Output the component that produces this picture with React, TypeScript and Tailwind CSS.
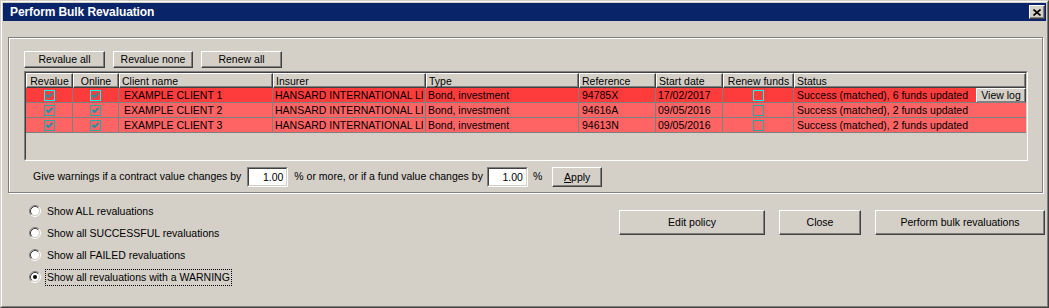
import React from "react";

const RAISED =
  "border border-t-white border-l-white border-r-[#404040] border-b-[#404040] shadow-[inset_-1px_-1px_0_#808080] bg-[#d4d0c8]";
const SUNKEN_OUT = "border border-t-[#808080] border-l-[#808080] border-r-white border-b-white";
const SUNKEN_IN = "border border-t-[#404040] border-l-[#404040] border-r-[#d4d0c8] border-b-[#d4d0c8]";
const COLS = "grid grid-cols-[47px_46px_154px_153px_153px_77px_67px_71px_232px]";

function Btn({ children, className = "" }: { children: React.ReactNode; className?: string }) {
  return (
    <div className={`${RAISED} flex items-center justify-center leading-none text-black ${className}`}>{children}</div>
  );
}

function Check({ checked, bright }: { checked: boolean; bright: boolean }) {
  return (
    <div
      className={`w-[11px] h-[11px] border flex items-center justify-center ${
        bright ? "border-[#00ffff]" : "border-[#2aa6a6]"
      }`}
    >
      {checked && (
        <svg width="9" height="9" viewBox="0 0 9 9">
          <path d="M1.5 4 L3.5 6.2 L7.6 1.8" stroke="#1a94a8" strokeWidth="1.9" fill="none" />
        </svg>
      )}
    </div>
  );
}

function Radio({ checked }: { checked: boolean }) {
  return (
    <svg width="12" height="12" viewBox="0 0 12 12" className="shrink-0">
      <circle cx="6" cy="6" r="4.2" fill="#fff" />
      <path d="M2.11 9.89 A5.5 5.5 0 0 1 9.89 2.11" stroke="#808080" strokeWidth="1" fill="none" />
      <path d="M9.89 2.11 A5.5 5.5 0 0 1 2.11 9.89" stroke="#ffffff" strokeWidth="1" fill="none" />
      <path d="M2.82 9.18 A4.5 4.5 0 0 1 9.18 2.82" stroke="#404040" strokeWidth="1" fill="none" />
      <path d="M9.18 2.82 A4.5 4.5 0 0 1 2.82 9.18" stroke="#d4d0c8" strokeWidth="1" fill="none" />
      {checked && <circle cx="6" cy="6" r="2" fill="#000" />}
    </svg>
  );
}

const headers: { label: string; center?: boolean }[] = [
  { label: "Revalue", center: true },
  { label: "Online", center: true },
  { label: "Client name" },
  { label: "Insurer" },
  { label: "Type" },
  { label: "Reference" },
  { label: "Start date" },
  { label: "Renew funds", center: true },
  { label: "Status" },
];

const rows = [
  { client: "EXAMPLE CLIENT 1", ref: "94785X", date: "17/02/2017", status: "Success (matched), 6 funds updated", sel: true },
  { client: "EXAMPLE CLIENT 2", ref: "94616A", date: "09/05/2016", status: "Success (matched), 2 funds updated", sel: false },
  { client: "EXAMPLE CLIENT 3", ref: "94613N", date: "09/05/2016", status: "Success (matched), 2 funds updated", sel: false },
];

const CELL = "h-[15px] border-r border-b border-[#808080] overflow-hidden whitespace-nowrap leading-[14px] flex items-center";

export default function App() {
  return (
    <div className="w-[1049px] h-[308px] border border-t-[#d4d0c8] border-l-[#d4d0c8] border-r-[#404040] border-b-[#404040] font-['Liberation_Sans',Arial,sans-serif] text-[10.5px] text-black bg-[#d4d0c8]">
      <div className="h-full border border-t-white border-l-white border-r-[#808080] border-b-[#808080] p-px flex flex-col">
        {/* Title bar */}
        <div className="h-[18px] bg-[#0a246a] flex items-center pl-[7px] pr-px shrink-0">
          <span className="text-white font-bold text-[12px] leading-none tracking-[-0.1px]">Perform Bulk Revaluation</span>
          <div className={`${RAISED} ml-auto w-[16px] h-[14px] flex items-center justify-center`}>
            <svg width="8" height="7" viewBox="0 0 8 7">
              <path d="M0.5 0.5 L7.5 6.5 M7.5 0.5 L0.5 6.5" stroke="#000" strokeWidth="1.6" fill="none" />
            </svg>
          </div>
        </div>

        {/* Group box */}
        <div className="mt-[16px] ml-[5px] mr-[3px] border border-[#808080] shadow-[inset_1px_1px_0_#fff,1px_1px_0_#fff] pt-[13px] pl-[15px] pb-[5px]">
          <div className="flex gap-[8px]">
            <Btn className="w-[81px] h-[17px]">Revalue all</Btn>
            <Btn className="w-[80px] h-[17px]">Revalue none</Btn>
            <Btn className="w-[81px] h-[17px]">Renew all</Btn>
          </div>

          <div className={`${SUNKEN_OUT} mt-[3px] w-[1004px] h-[90px]`}>
            <div className={`${SUNKEN_IN} h-full overflow-hidden`}>
              <div className={COLS}>
                {headers.map((h) => (
                  <div
                    key={h.label}
                    className={`h-[15px] border border-t-white border-l-white border-r-[#404040] border-b-[#404040] shadow-[inset_-1px_-1px_0_#808080] leading-[12px] whitespace-nowrap overflow-hidden flex items-center ${
                      h.center ? "justify-center" : "pl-[2px]"
                    }`}
                  >
                    {h.label}
                  </div>
                ))}
              </div>
              {rows.map((r) => (
                <div key={r.client} className={`${COLS} ${r.sel ? "bg-[#ff3c3c]" : "bg-[#ff6464]"}`}>
                  <div className={`${CELL} justify-center`}>
                    <Check checked bright={r.sel} />
                  </div>
                  <div className={`${CELL} justify-center`}>
                    <Check checked bright={r.sel} />
                  </div>
                  <div className={`${CELL} pl-[5px]`}>{r.client}</div>
                  <div className={`${CELL} pl-[2px]`}>
                    <span className="block w-[148px] overflow-hidden">HANSARD INTERNATIONAL LIMITED</span>
                  </div>
                  <div className={`${CELL} pl-[2px]`}>Bond, investment</div>
                  <div className={`${CELL} pl-[3px]`}>{r.ref}</div>
                  <div className={`${CELL} pl-[2px]`}>{r.date}</div>
                  <div className={`${CELL} justify-center`}>
                    <Check checked={false} bright={r.sel} />
                  </div>
                  <div className={`${CELL} pl-[3px] border-r-0`}>
                    <span>{r.status}</span>
                    {r.sel && <Btn className="ml-auto w-[50px] h-[15px]">View log</Btn>}
                  </div>
                </div>
              ))}
            </div>
          </div>

          <div className="mt-[6px] flex items-center h-[20px]">
            <span className="ml-[9px] mr-[6px] whitespace-nowrap">Give warnings if a contract value changes by</span>
            <div className={`${SUNKEN_OUT} w-[41px] h-[20px] bg-white`}>
              <div className={`${SUNKEN_IN} h-full bg-white flex items-center justify-end pr-[3px] leading-none`}>1.00</div>
            </div>
            <span className="ml-[6px] mr-[4px] whitespace-nowrap">% or more, or if a fund value changes by</span>
            <div className={`${SUNKEN_OUT} w-[41px] h-[20px] bg-white`}>
              <div className={`${SUNKEN_IN} h-full bg-white flex items-center justify-end pr-[3px] leading-none`}>1.00</div>
            </div>
            <span className="ml-[5px]">%</span>
            <Btn className="ml-[10px] w-[50px] h-[20px]">
              <span>
                <span className="underline">A</span>pply
              </span>
            </Btn>
          </div>
        </div>

        {/* Bottom section */}
        <div className="flex items-start mt-[7px] pr-px">
          <div className="flex flex-col pl-[26px]">
            {[
              "Show ALL revaluations",
              "Show all SUCCESSFUL revaluations",
              "Show all FAILED revaluations",
              "Show all revaluations with a WARNING",
            ].map((t, i) => (
              <div key={t} className="h-[22px] flex items-center gap-[4px]">
                <Radio checked={i === 3} />
                <span
                  className={`h-[17px] px-px flex items-center border leading-none whitespace-nowrap ${
                    i === 3 ? "border-dotted border-black" : "border-transparent"
                  }`}
                >
                  {t}
                </span>
              </div>
            ))}
          </div>
          <div className="ml-auto mt-[10px] flex gap-[14px]">
            <Btn className="w-[146px] h-[25px]">Edit policy</Btn>
            <Btn className="w-[82px] h-[25px]">Close</Btn>
            <Btn className="w-[170px] h-[25px]">Perform bulk revaluations</Btn>
          </div>
        </div>
      </div>
    </div>
  );
}
